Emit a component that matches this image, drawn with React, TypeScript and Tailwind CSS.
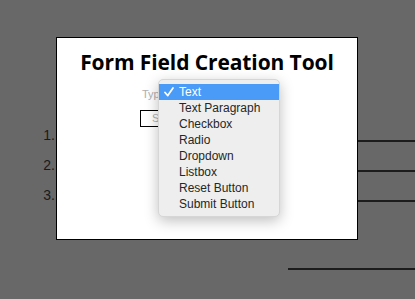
import React from "react";

const items = ["Text", "Text Paragraph", "Checkbox", "Radio", "Dropdown", "Listbox", "Reset Button", "Submit Button"];

export default function App() {
  return (
    <div className="relative w-[415px] h-[299px] overflow-hidden bg-[#686868]" style={{ fontFamily: '"Liberation Sans", Arial, sans-serif' }}>
      {/* background list */}
      <ol className="pt-[125px] text-[14px] text-[#1a1a1a]">
        {[1, 2, 3].map((n) => (
          <li key={n} className="flex h-[30px] items-start">
            <span className="w-[56px] pr-[1px] text-right leading-[20px]">{n}.</span>
            <span className="ml-auto mt-[15px] h-[1.5px] w-[120px] bg-[#1c1c1c]" />
          </li>
        ))}
        <li className="flex h-[30px] items-start">
          <span className="ml-auto mt-[53px] h-[1.5px] w-[127px] bg-[#1c1c1c]" />
        </li>
      </ol>

      {/* modal */}
      <div className="absolute left-[56px] top-[37px] w-[302px] h-[203px] bg-white border border-black flex flex-col items-center">
        <h1 className="mt-[9px] text-[21px] font-bold text-black tracking-[-0.1px]" style={{ fontFamily: '"Open Sans", sans-serif' }}>
          Form Field Creation Tool
        </h1>
        <div className="self-start ml-[85px] mt-[7px] text-[11px] text-[#b0b0b0]">Type</div>
        <div className="self-start ml-[83px] mt-[8px] w-[60px] h-[17px] border border-black text-[11px] text-[#b0b0b0] pl-[11px] leading-[15px]">Select</div>
      </div>

      {/* dropdown menu */}
      <div className="absolute left-[158px] top-[79px] w-[122px] rounded-[5px] bg-[#eeeeee] border border-[#d6d6d6] shadow-[0_4px_14px_rgba(0,0,0,0.25)] pt-[4px] pb-[4px] text-[12px] text-[#262626]">
        {items.map((it, i) => (
          <div key={it} className={`relative h-[16px] leading-[16px] pl-[20px] ${i === 0 ? "bg-[#4a9bf8] text-white" : ""}`}>
            {i === 0 && (
              <svg className="absolute left-[5px] top-[3px]" width="10" height="10" viewBox="0 0 10 10" fill="none">
                <path d="M1 5.5 L3.8 8.6 L9 1" stroke="white" strokeWidth="1.7" strokeLinecap="round" strokeLinejoin="round" />
              </svg>
            )}
            {it}
          </div>
        ))}
      </div>
    </div>
  );
}
